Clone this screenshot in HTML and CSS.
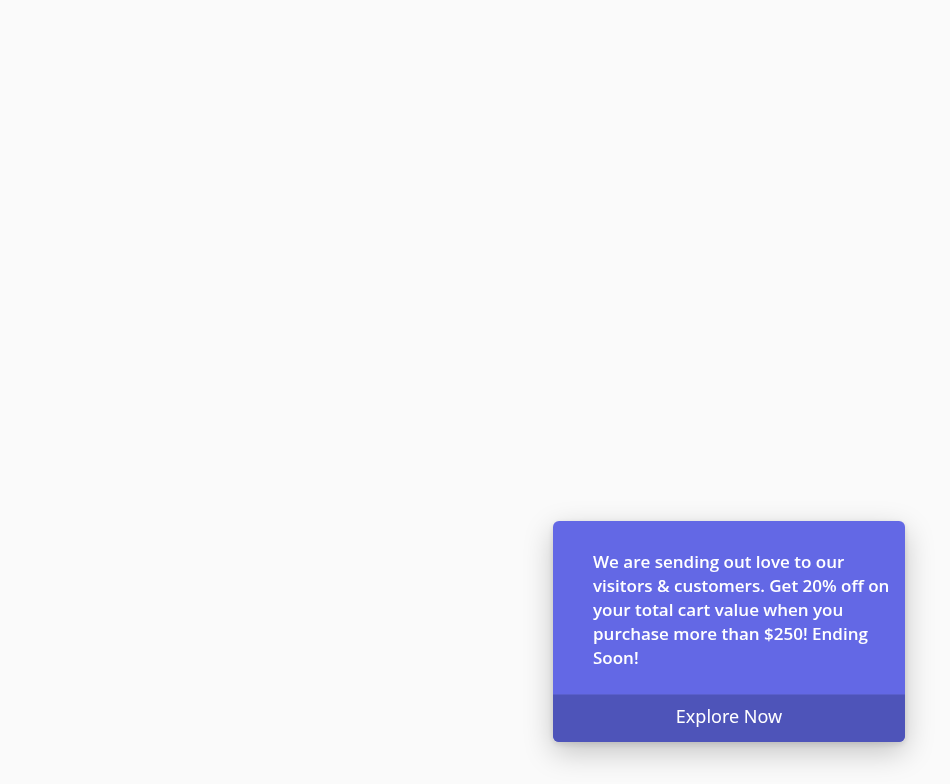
FILE: index.html
```html
<!DOCTYPE html>
<html lang="en">
<head>
<meta charset="utf-8">
<title>Promo</title>
<link rel="stylesheet" href="styles.css">
</head>
<body>
<div class="toast">
  <p class="toast-text">We are sending out love to our visitors &amp; customers. Get 20% off on your total cart value when you purchase more than $250! Ending Soon!</p>
  <a class="toast-action" href="#">Explore Now</a>
</div>
</body>
</html>
```
FILE: styles.css
```css
html, body {
  margin: 0;
  padding: 0;
  height: 100%;
  background: #fafafa;
}
body {
  font-family: "Open Sans", "Noto Sans", sans-serif;
}
.toast {
  position: fixed;
  right: 45px;
  bottom: 42px;
  width: 352px;
  border-radius: 6px;
  overflow: hidden;
  background: #6368e5;
  box-shadow: 0 10px 30px rgba(0, 0, 0, 0.22), 0 2px 6px rgba(0, 0, 0, 0.12);
}
.toast-text {
  margin: 0;
  padding: 29px 10px 24px 40px;
  color: #ffffff;
  font-size: 17px;
  line-height: 24px;
  font-weight: 600;
}
.toast-action {
  display: block;
  height: 47px;
  line-height: 43px;
  text-align: center;
  color: #ffffff;
  text-decoration: none;
  font-family: "Noto Sans", sans-serif;
  font-size: 18px;
  background: #4e54b9;
  border-top: 1px solid #5a5fcc;
}
```
